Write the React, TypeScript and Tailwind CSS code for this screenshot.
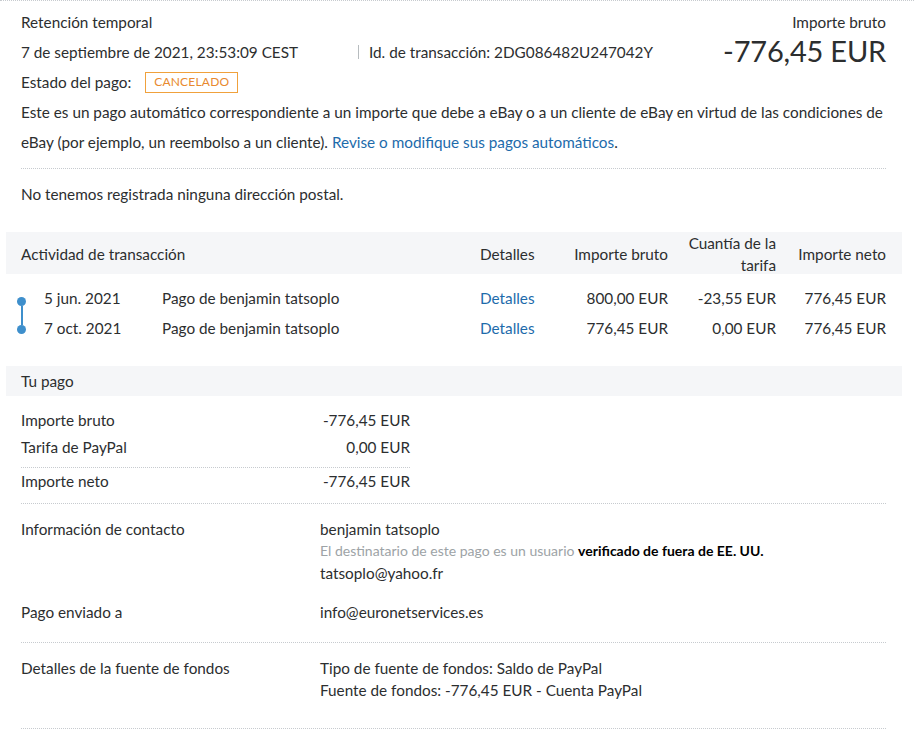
import React from "react";

const txt = "text-[#2c2e2f]";

function Dot() {
  return <div className="w-[9px] h-[9px] rounded-full bg-[#3e8fcc]" />;
}

export default function App() {
  const rows = [
    { date: "5 jun. 2021", desc: "Pago de benjamin tatsoplo", bruto: "800,00 EUR", tarifa: "-23,55 EUR", neto: "776,45 EUR", first: true },
    { date: "7 oct. 2021", desc: "Pago de benjamin tatsoplo", bruto: "776,45 EUR", tarifa: "0,00 EUR", neto: "776,45 EUR", first: false },
  ];
  return (
    <div
      className={`w-[914px] h-[735px] overflow-hidden bg-white border-t border-dotted border-[#c7cbcf] text-[15.3px] ${txt}`}
      style={{ fontFamily: "Lato, 'Open Sans', sans-serif" }}
    >
      <div className="ml-[6px] w-[896px]">
        {/* header */}
        <div className="pl-[15px] pr-[16px] pt-[6px]">
          <div className="flex justify-between">
            <div className="leading-[30px]">
              <div>Retención temporal</div>
              <div className="flex">
                <div className="w-[337px]">7 de septiembre de 2021, 23:53:09 CEST</div>
                <div className="flex items-center">
                  <span className="block w-px h-[14px] bg-[#b7bcbf]" />
                  <span className="ml-[10px]">Id. de transacción: 2DG086482U247042Y</span>
                </div>
              </div>
              <div className="flex items-center">
                <span>Estado del pago:</span>
                <span className="ml-[14px] inline-flex items-center justify-center h-[21px] w-[93px] border border-[#f0a13c] text-[#e8892e] text-[12px] leading-none tracking-[0.2px]">
                  CANCELADO
                </span>
              </div>
            </div>
            <div className="flex flex-col items-end">
              <div className="leading-[30px]">Importe bruto</div>
              <div className="text-[29px] leading-[30px] mt-[-1px] tracking-[-0.2px]">-776,45 EUR</div>
            </div>
          </div>
          <div className="leading-[30px]">
            Este es un pago automático correspondiente a un importe que debe a eBay o a un cliente de eBay en virtud de las condiciones de eBay (por ejemplo, un reembolso a un cliente).{" "}
            <span className="text-[#1d6bab]">Revise o modifique sus pagos automáticos</span>.
          </div>
          <div className="mt-[11px] border-t border-dotted border-[#c7cbcf]" />
          <div className="mt-[10px] leading-[30px]">No tenemos registrada ninguna dirección postal.</div>
        </div>

        {/* Activity table */}
        <div className="mt-[23px] h-[42px] bg-[#f5f6f8] pl-[15px] pr-[16px] grid grid-cols-[23px_118px_318px_70px_118px_108px_110px] items-center">
          <div className="col-span-3">Actividad de transacción</div>
          <div>Detalles</div>
          <div className="text-right">Importe bruto</div>
          <div className="text-right leading-[22px]">
            Cuantía de la
            <br />
            tarifa
          </div>
          <div className="text-right">Importe neto</div>
        </div>
        <div className="pt-[9px] pl-[15px] pr-[16px]">
          {rows.map((r) => (
            <div key={r.date} className="h-[30px] leading-[30px] grid grid-cols-[23px_118px_318px_70px_118px_108px_110px]">
              <div className="h-[30px]">
                <div className="w-[9px] -ml-[4px] h-[30px] flex flex-col items-center">
                  {r.first ? (
                    <>
                      <div className="h-[14px]" />
                      <Dot />
                      <div className="flex-1 w-[2px] bg-[#3e8fcc]" />
                    </>
                  ) : (
                    <>
                      <div className="h-[12px] w-[2px] bg-[#3e8fcc]" />
                      <Dot />
                    </>
                  )}
                </div>
              </div>
              <div>{r.date}</div>
              <div>{r.desc}</div>
              <div className="text-[#1d6bab]">Detalles</div>
              <div className="text-right">{r.bruto}</div>
              <div className="text-right">{r.tarifa}</div>
              <div className="text-right">{r.neto}</div>
            </div>
          ))}
        </div>

        {/* Tu pago */}
        <div className="mt-[23px] h-[30px] leading-[30px] bg-[#f5f6f8] pl-[15px] pr-[16px]">Tu pago</div>
        <div className="pl-[15px] pr-[16px]">
          <div className="pt-[11px] w-[389px] leading-[27px]">
            <div className="flex justify-between">
              <span>Importe bruto</span>
              <span>-776,45 EUR</span>
            </div>
            <div className="flex justify-between">
              <span>Tarifa de PayPal</span>
              <span>0,00 EUR</span>
            </div>
            <div className="mt-[6px] border-t border-dotted border-[#c7cbcf]" />
            <div className="flex justify-between">
              <span>Importe neto</span>
              <span>-776,45 EUR</span>
            </div>
          </div>
          <div className="mt-[8px] border-t border-dotted border-[#c7cbcf]" />

          <div className="pt-[14px] leading-[22px]">
            <div className="flex">
              <div className="w-[299px]">Información de contacto</div>
              <div>
                <div>benjamin tatsoplo</div>
                <div className="text-[14px] text-[#9da3a6]">
                  El destinatario de este pago es un usuario{" "}
                  <span className="font-bold text-black">verificado de fuera de EE. UU.</span>
                </div>
                <div>tatsoplo@yahoo.fr</div>
              </div>
            </div>
            <div className="flex mt-[17px]">
              <div className="w-[299px]">Pago enviado a</div>
              <div>info@euronetservices.es</div>
            </div>
          </div>
          <div className="mt-[19px] border-t border-dotted border-[#c7cbcf]" />
          <div className="pt-[14px] leading-[22px] flex">
            <div className="w-[299px]">Detalles de la fuente de fondos</div>
            <div>
              <div>Tipo de fuente de fondos: Saldo de PayPal</div>
              <div>Fuente de fondos: -776,45 EUR - Cuenta PayPal</div>
            </div>
          </div>
          <div className="mt-[27px] border-t border-dotted border-[#c7cbcf]" />
        </div>
      </div>
    </div>
  );
}
